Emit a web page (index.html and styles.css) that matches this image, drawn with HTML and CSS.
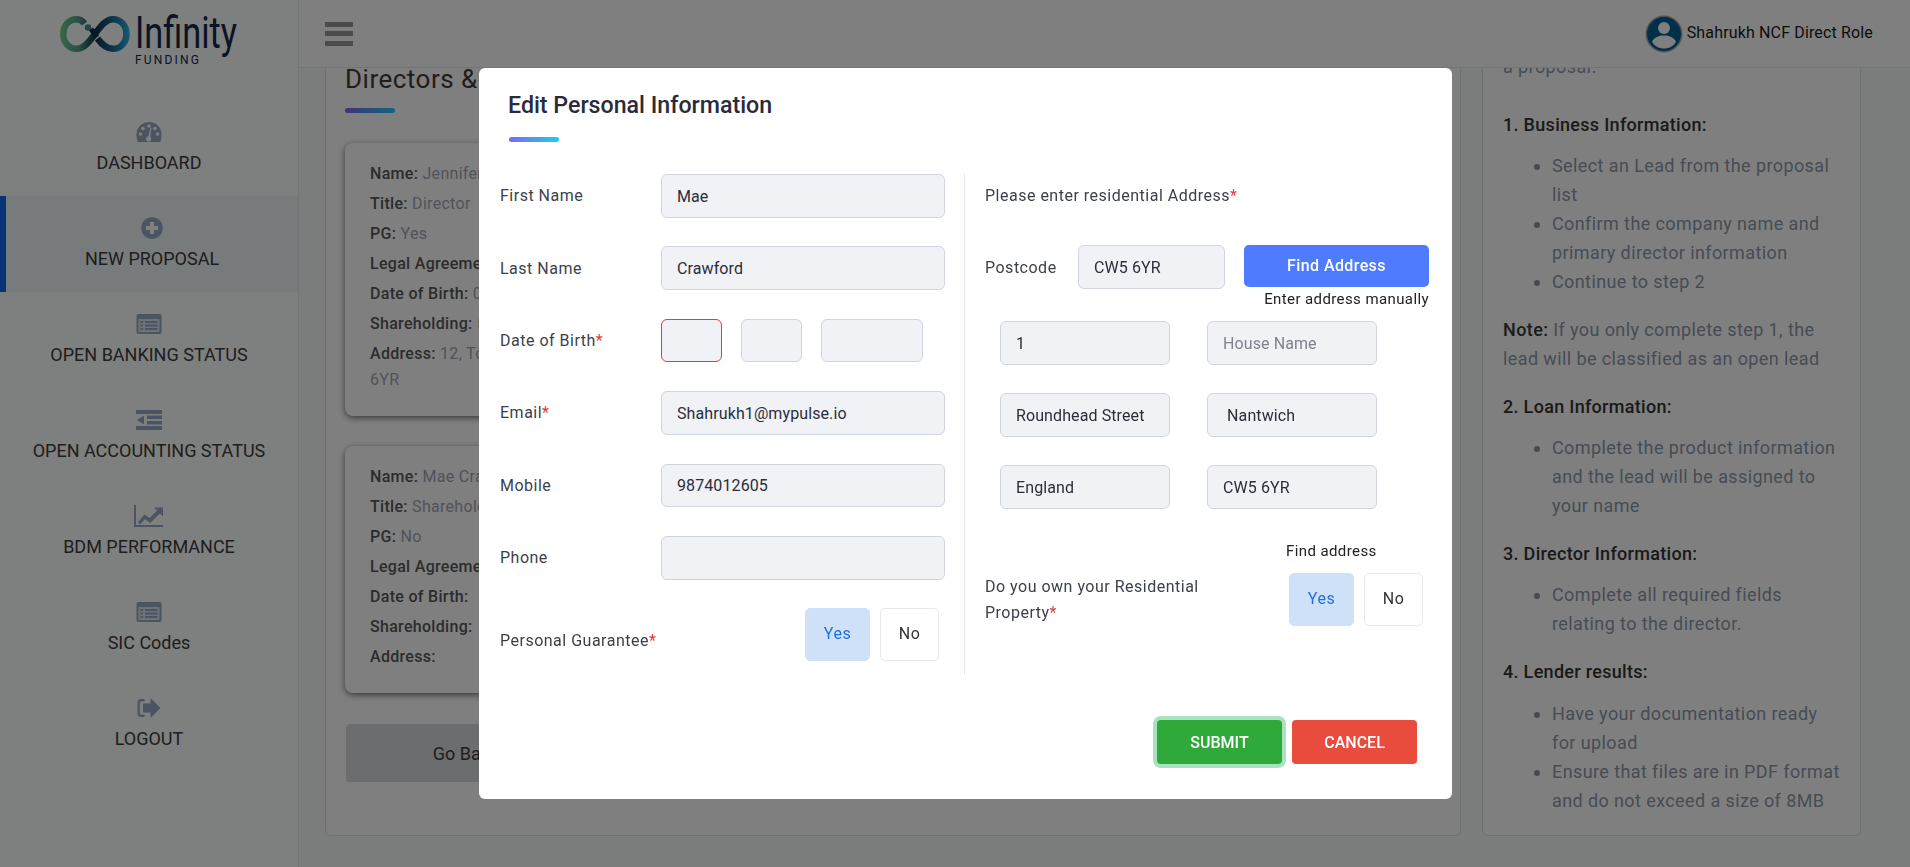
FILE: index.html
```html
<!DOCTYPE html>
<html lang="en">
<head>
<meta charset="utf-8">
<title>Edit Personal Information</title>
<link rel="stylesheet" href="styles.css">
</head>
<body>
<div class="app">
  <aside class="sidebar">
    <div class="logo">
      <svg width="190" height="60" viewBox="0 0 190 60" aria-label="Infinity Funding">
        <defs>
          <linearGradient id="inf" gradientUnits="userSpaceOnUse" x1="0" y1="0" x2="70" y2="0">
            <stop offset="0" stop-color="#6fd08f"/>
            <stop offset=".28" stop-color="#4f9d8a"/>
            <stop offset=".5" stop-color="#12304a"/>
            <stop offset=".72" stop-color="#1c5f86"/>
            <stop offset="1" stop-color="#2fb4e6"/>
          </linearGradient>
        </defs>
        <path d="M24.500 11.500C22 8.500 19.500 7.200 16.500 7.200C9 7.200 3.300 13.500 3.300 22S9 36.800 16.500 36.800C24 36.800 29 30 35 22C41 14 46 7.200 53 7.200C60.500 7.200 66.500 13.500 66.500 22S60.500 36.800 53 36.800C46 36.800 41.500 32 37.500 26.500" fill="none" stroke="url(#inf)" stroke-width="6.500"/>
        <circle cx="28" cy="15.500" r="3.200" fill="#3f8f86"/>
        <path d="M31 17L37 25" stroke="#12304a" stroke-width="5"/>
        <text class="logo-word" x="75" y="35.500" textLength="102" lengthAdjust="spacingAndGlyphs">Infinity</text>
        <text class="logo-sub" x="75" y="52" textLength="64">FUNDING</text>
      </svg>
    </div>
    <nav class="nav">
      <a class="nav-item">
        <svg class="nav-icon" width="26" height="22" viewBox="0 0 26 22"><path class="ico" d="M13 1C6 1 .500 6.500 .500 13.500C.500 16.500 1 19 2 21H24C25 19 25.500 16.500 25.500 13.500C25.500 6.500 20 1 13 1Z"/><g class="ico-cut"><circle cx="13" cy="5" r="1.800"/><circle cx="7" cy="7.500" r="1.800"/><circle cx="19" cy="7.500" r="1.800"/><circle cx="4.500" cy="13" r="1.800"/><circle cx="21.500" cy="13" r="1.800"/><path d="M14.500 6.500L15.500 7L14.200 15.800A2.600 2.600 0 1 1 12.300 15.300Z"/></g></svg>
        <span>DASHBOARD</span>
      </a>
      <a class="nav-item active">
        <svg class="nav-icon" width="22" height="22" viewBox="0 0 22 22"><circle class="ico" cx="11" cy="11" r="10.800"/><path class="ico-cut" d="M9 5H13V9H17V13H13V17H9V13H5V9H9Z"/></svg>
        <span>NEW PROPOSAL</span>
      </a>
      <a class="nav-item">
        <svg class="nav-icon" width="26" height="20" viewBox="0 0 26 20"><rect class="ico" x=".5" width="25" height="20" rx="2"/><rect class="ico-soft" x="2.500" y="5" width="21" height="13"/><path class="ico" d="M4.500 7H7V9H4.500ZM9 7H21.500V9H9ZM4.500 10.500H7V12.500H4.500ZM9 10.500H21.500V12.500H9ZM4.500 14H7V16H4.500ZM9 14H21.500V16H9Z"/></svg>
        <span>OPEN BANKING STATUS</span>
      </a>
      <a class="nav-item">
        <svg class="nav-icon" width="26" height="20" viewBox="0 0 26 20"><path class="ico" d="M0 0H26V4H0ZM11 5.500H26V9H11ZM11 11H26V14.500H11ZM0 16H26V20H0ZM8 5.500V14.500L1 10Z"/></svg>
        <span>OPEN ACCOUNTING STATUS</span>
      </a>
      <a class="nav-item">
        <svg class="nav-icon" width="30" height="22" viewBox="0 0 30 22"><path class="ico" d="M0 0H2V20H29V22H0ZM4 17L10.500 9.500L15.500 13L23 5.500L20 2.500H29V11.500L26 8.500L16 18L11 14L6 19.500Z"/></svg>
        <span>BDM PERFORMANCE</span>
      </a>
      <a class="nav-item">
        <svg class="nav-icon" width="26" height="20" viewBox="0 0 26 20"><rect class="ico" x=".5" width="25" height="20" rx="2"/><rect class="ico-soft" x="2.500" y="5" width="21" height="13"/><path class="ico" d="M4.500 7H7V9H4.500ZM9 7H21.500V9H9ZM4.500 10.500H7V12.500H4.500ZM9 10.500H21.500V12.500H9ZM4.500 14H7V16H4.500ZM9 14H21.500V16H9Z"/></svg>
        <span>SIC Codes</span>
      </a>
      <a class="nav-item">
        <svg class="nav-icon" width="24" height="20" viewBox="0 0 24 20"><path class="ico" d="M7 1H4C2 1 .500 2.500 .500 4.500V15.500C.500 17.500 2 19 4 19H7.500V16.800H4.500C3.500 16.800 2.800 16 2.800 15V5C2.800 4 3.500 3.200 4.500 3.200H7.500V1ZM13.500 0L23.500 10L13.500 20V14.500H6V5.500H13.500Z"/></svg>
        <span>LOGOUT</span>
      </a>
    </nav>
  </aside>

  <div class="main">
    <header class="topbar">
      <div class="burger"><i></i><i></i><i></i></div>
      <div class="user">
        <svg class="avatar" width="38" height="38" viewBox="0 0 38 38"><circle cx="19" cy="19" r="18.500" fill="#a6a6a6"/><circle cx="19" cy="19" r="17" fill="#01608f"/><circle cx="19" cy="13" r="6" fill="#fff"/><path d="M7 27C9 22 14 20.500 19 20.500S29 22 31 27C28 31.500 24 33.500 19 33.500S10 31.500 7 27Z" fill="#fff"/></svg>
        <span>Shahrukh NCF Direct Role</span>
      </div>
    </header>
    <div class="content">
      <div class="grid">
        <section class="panel panel-left">
          <h2 class="panel-title">Directors &amp; Shareholders</h2>
          <div class="accent"></div>
          <article class="person">
            <p><b>Name:</b> Jennifer Crawford</p>
            <p><b>Title:</b> Director</p>
            <p><b>PG:</b> Yes</p>
            <p><b>Legal Agreement:</b> Yes</p>
            <p><b>Date of Birth:</b> 01/01/1970</p>
            <p><b>Shareholding:</b> 50%</p>
            <p class="wrap"><b>Address:</b> 12, Town Street<br>6YR</p>
          </article>
          <article class="person person-short">
            <p><b>Name:</b> Mae Crawford</p>
            <p><b>Title:</b> Shareholder</p>
            <p><b>PG:</b> No</p>
            <p><b>Legal Agreement:</b> No</p>
            <p><b>Date of Birth:</b></p>
            <p><b>Shareholding:</b></p>
            <p><b>Address:</b></p>
          </article>
          <button class="back" type="button">Go Back</button>
        </section>
        <section class="panel panel-right">
          <p class="intro">a proposal.</p>
          <h4>1. Business Information:</h4>
          <ul>
            <li>Select an Lead from the proposal list</li>
            <li>Confirm the company name and primary director information</li>
            <li>Continue to step 2</li>
          </ul>
          <p class="note"><b>Note:</b> If you only complete step 1, the lead will be classified as an open lead</p>
          <h4>2. Loan Information:</h4>
          <ul>
            <li>Complete the product information and the lead will be assigned to your name</li>
          </ul>
          <h4>3. Director Information:</h4>
          <ul>
            <li>Complete all required fields relating to the director.</li>
          </ul>
          <h4 class="h-last">4. Lender results:</h4>
          <ul>
            <li>Have your documentation ready for upload</li>
            <li>Ensure that files are in PDF format and do not exceed a size of 8MB</li>
          </ul>
        </section>
      </div>
    </div>
  </div>
</div>

<div class="backdrop"></div>

<div class="modal">
  <h3 class="modal-title">Edit Personal Information</h3>
  <div class="accent accent-bright"></div>
  <form class="modal-body">
    <div class="col-left">
      <div class="row"><label>First Name</label><input class="field" value="Mae"></div>
      <div class="row"><label>Last Name</label><input class="field" value="Crawford"></div>
      <div class="row"><label>Date of Birth<em>*</em></label>
        <div class="dob"><input class="field error dd"><input class="field mm"><input class="field yy"></div>
      </div>
      <div class="row"><label>Email<em>*</em></label><input class="field" value="Shahrukh1@mypulse.io"></div>
      <div class="row"><label>Mobile</label><input class="field" value="9874012605"></div>
      <div class="row"><label>Phone</label><input class="field"></div>
      <div class="row-choice">
        <label>Personal Guarantee<em>*</em></label>
        <div class="choice"><button type="button" class="opt on">Yes</button><button type="button" class="opt">No</button></div>
      </div>
    </div>
    <div class="col-right">
      <div class="addr-head"><label>Please enter residential Address<em>*</em></label></div>
      <div class="post-row">
        <label>Postcode</label>
        <input class="field post" value="CW5 6YR">
        <button type="button" class="find">Find Address</button>
      </div>
      <div class="manual">Enter address manually</div>
      <div class="addr-grid">
        <input class="field" value="1">
        <input class="field" placeholder="House Name">
        <input class="field" value="Roundhead Street">
        <input class="field" value=" Nantwich">
        <input class="field" value="England">
        <input class="field" value="CW5 6YR">
      </div>
      <div class="find-link">Find address</div>
      <div class="own-row">
        <label>Do you own your Residential Property<em>*</em></label>
        <div class="choice"><button type="button" class="opt on">Yes</button><button type="button" class="opt">No</button></div>
      </div>
    </div>
  </form>
  <div class="modal-foot">
    <button type="button" class="act submit">SUBMIT</button>
    <button type="button" class="act cancel">CANCEL</button>
  </div>
</div>
</body>
</html>
```
FILE: styles.css
```css
* { box-sizing: border-box; }
html, body { margin: 0; height: 100%; overflow: hidden; }
body { font-family: Roboto, "Liberation Sans", sans-serif; background: #f6faf9; color: #333; }

.app { display: flex; height: 867px; }

/* sidebar */
.sidebar { width: 299px; flex: none; background: #fdfffe; border-right: 1px solid #e6eaea; }
.logo { height: 100px; padding: 12px 0 0 60px; }
.logo svg { display: block; }
.logo-word { font-family: Roboto, sans-serif; font-size: 44px; font-weight: 400; fill: #12294a; }
.logo-sub { font-family: Roboto, sans-serif; font-size: 12px; font-weight: 400; fill: #12294a; }
.nav-item { display: flex; flex-direction: column; align-items: center; height: 96px; padding-top: 21px; color: #3c3c3c; font-size: 18px; line-height: 24px; }
.nav-icon { display: block; height: 22px; margin-bottom: 8px; }
.nav-item.active { border-left: 6px solid #0a66f0; background: #f0f7f7; }
.ico { fill: #96a8c2; }
.ico-cut { fill: #fdfffe; }
.ico-soft { fill: #dfe5ee; }

/* main */
.main { flex: 1; min-width: 0; display: flex; flex-direction: column; }
.topbar { position: relative; z-index: 2; height: 68px; flex: none; display: flex; align-items: center; justify-content: space-between; padding: 0 37px 0 26px; background: #fefefe; border-bottom: 1px solid #e6eaea; }
.burger { display: flex; flex-direction: column; gap: 4.500px; width: 28px; }
.burger i { display: block; height: 5px; background: #979797; }
.user { display: flex; align-items: center; gap: 4px; font-size: 16px; letter-spacing: .15px; color: #1a1a1a; }
.avatar { display: block; }
.user span { margin-top: -2px; }

.content { flex: 1; overflow: hidden; }
.grid { display: grid; grid-template-columns: 1136px 379px; gap: 21px; margin: -18px 0 0 26px; height: 786px; }
.panel { background: #ffffff; border: 1px solid #dde1e1; border-radius: 6px; }

.panel-left { padding: 12px 20px 0 19px; }
.panel-title { margin: 0; font-size: 26px; line-height: 32px; font-weight: 400; letter-spacing: .5px; color: #443a3a; }
.accent { width: 50px; height: 5px; margin-top: 13px; border-radius: 3px; background: linear-gradient(90deg, #7f67f2, #1bcdf5); }
.person { margin-top: 30px; height: 273px; padding: 18px 25px 0; border-radius: 8px; background: #fff; box-shadow: 0 2px 6px rgba(0,0,0,.55); font-size: 16px; letter-spacing: .3px; color: #a0a6b2; }
.person-short { height: 247px; }
.person p { margin: 0 0 4px; line-height: 26px; }
.person b { font-weight: 500; color: #585858; }
.back { display: block; width: 240px; height: 58px; margin: 31px 0 0 1px; border: 0; border-radius: 4px; background: #d8dbdf; font: 400 18px Roboto, sans-serif; color: #3c3c3c; text-align: center; }

.panel-right { padding: 1px 20px 0; font-size: 18px; line-height: 29px; letter-spacing: .4px; color: #8e98a8; }
.panel-right p { margin: 0 0 19px; }
.panel-right .intro { margin-bottom: 29px; }
.panel-right b { font-weight: 500; color: #383838; }
.panel-right h4 { margin: 0 0 12px; font-size: 18px; line-height: 29px; font-weight: 500; letter-spacing: .3px; color: #343434; }
.panel-right ul { margin: 0 0 19px; padding: 0 0 0 49px; }
.panel-right .h-last { margin: 1px 0 13px; }

/* overlay */
.backdrop { position: fixed; inset: 0; z-index: 5; background: rgba(0,0,0,.5); }
.modal { position: fixed; z-index: 6; left: 479px; top: 68px; width: 973px; height: 731px; background: #fff; border-radius: 6px; padding: 22px 0 0 21px; }
.modal-title { margin: 0 0 0 8px; font-size: 23.200px; line-height: 30px; font-weight: 500; color: #2a2b3a; }
.accent-bright { margin: 17px 0 0 9px; }

.modal-body { display: flex; margin-top: 32px; height: 501px; }
.col-left { width: 464px; flex: none; }
.col-right { flex: 1; border-left: 1px solid #e4e8f3; padding-left: 20px; }

label { padding-top: 1px; font-size: 16px; letter-spacing: .5px; color: #3c3f4c; line-height: 26px; }
label em { font-style: normal; color: #e53935; }

.field { display: block; width: 100%; height: 43.600px; padding: 1px 15px 0; background: #f1f2f6; border: 1px solid #d0d4de; border-radius: 6px; font: 400 16px Roboto, sans-serif; letter-spacing: .1px; color: #2b2d3a; outline: 0; }
.field::placeholder { color: #7d838e; opacity: 1; }
.field.error { border-color: #e53935; }

.row { display: flex; align-items: center; height: 43.600px; margin-bottom: 28.800px; }
.row label { width: 161px; flex: none; }
.row > .field { width: 284px; }
.dob { display: flex; gap: 19px; }
.dd, .mm { width: 61px; }
.yy { width: 102px; }

.row-choice { display: flex; justify-content: space-between; width: 439px; margin-top: -0.400px; }
.row-choice label { margin-top: 19px; }
.choice { display: flex; gap: 10px; }
.opt { width: 59px; height: 53px; background: #fff; border: 1px solid #e8e8ea; border-radius: 5px; font: 400 16px Roboto, sans-serif; letter-spacing: .5px; color: #333; padding: 0 0 2px; }
.opt.on { width: 65px; background: #cfe0f9; border-color: #cfe0f9; color: #1f6fe0; }

.addr-head { display: flex; align-items: center; height: 43.600px; margin-bottom: 27.400px; }
.post-row { display: flex; align-items: flex-start; }
.post-row label { width: 93px; flex: none; margin-top: 9px; }
.post { width: 147px; flex: none; }
.find { width: 185px; height: 42px; margin-left: 19px; border: 0; border-radius: 5px; background: #4f7cff; color: #fff; font: 500 16px Roboto, sans-serif; letter-spacing: .4px; padding: 0; }
.manual { width: 444px; font-size: 15px; line-height: 20px; letter-spacing: .4px; text-align: right; color: #222; }
.addr-grid { display: grid; grid-template-columns: 170px 170px; column-gap: 37px; row-gap: 28.400px; margin: 12.400px 0 0 15px; }
.find-link { margin: 32.600px 0 0 301px; font-size: 15px; line-height: 20px; letter-spacing: .4px; color: #222; }
.own-row { display: flex; align-items: center; justify-content: space-between; width: 438px; margin-top: 12px; }
.own-row label { width: 240px; }

.modal-foot { display: flex; justify-content: flex-end; gap: 10px; padding-right: 35px; margin-top: 45px; }
.act { width: 125px; height: 44px; border: 0; border-radius: 4px; color: #fff; font: 500 16px Roboto, sans-serif; padding: 0; }
.submit { background: #2fa93a; box-shadow: 0 0 0 4px #a8e2c0; }
.cancel { background: #e94b3c; }
```
